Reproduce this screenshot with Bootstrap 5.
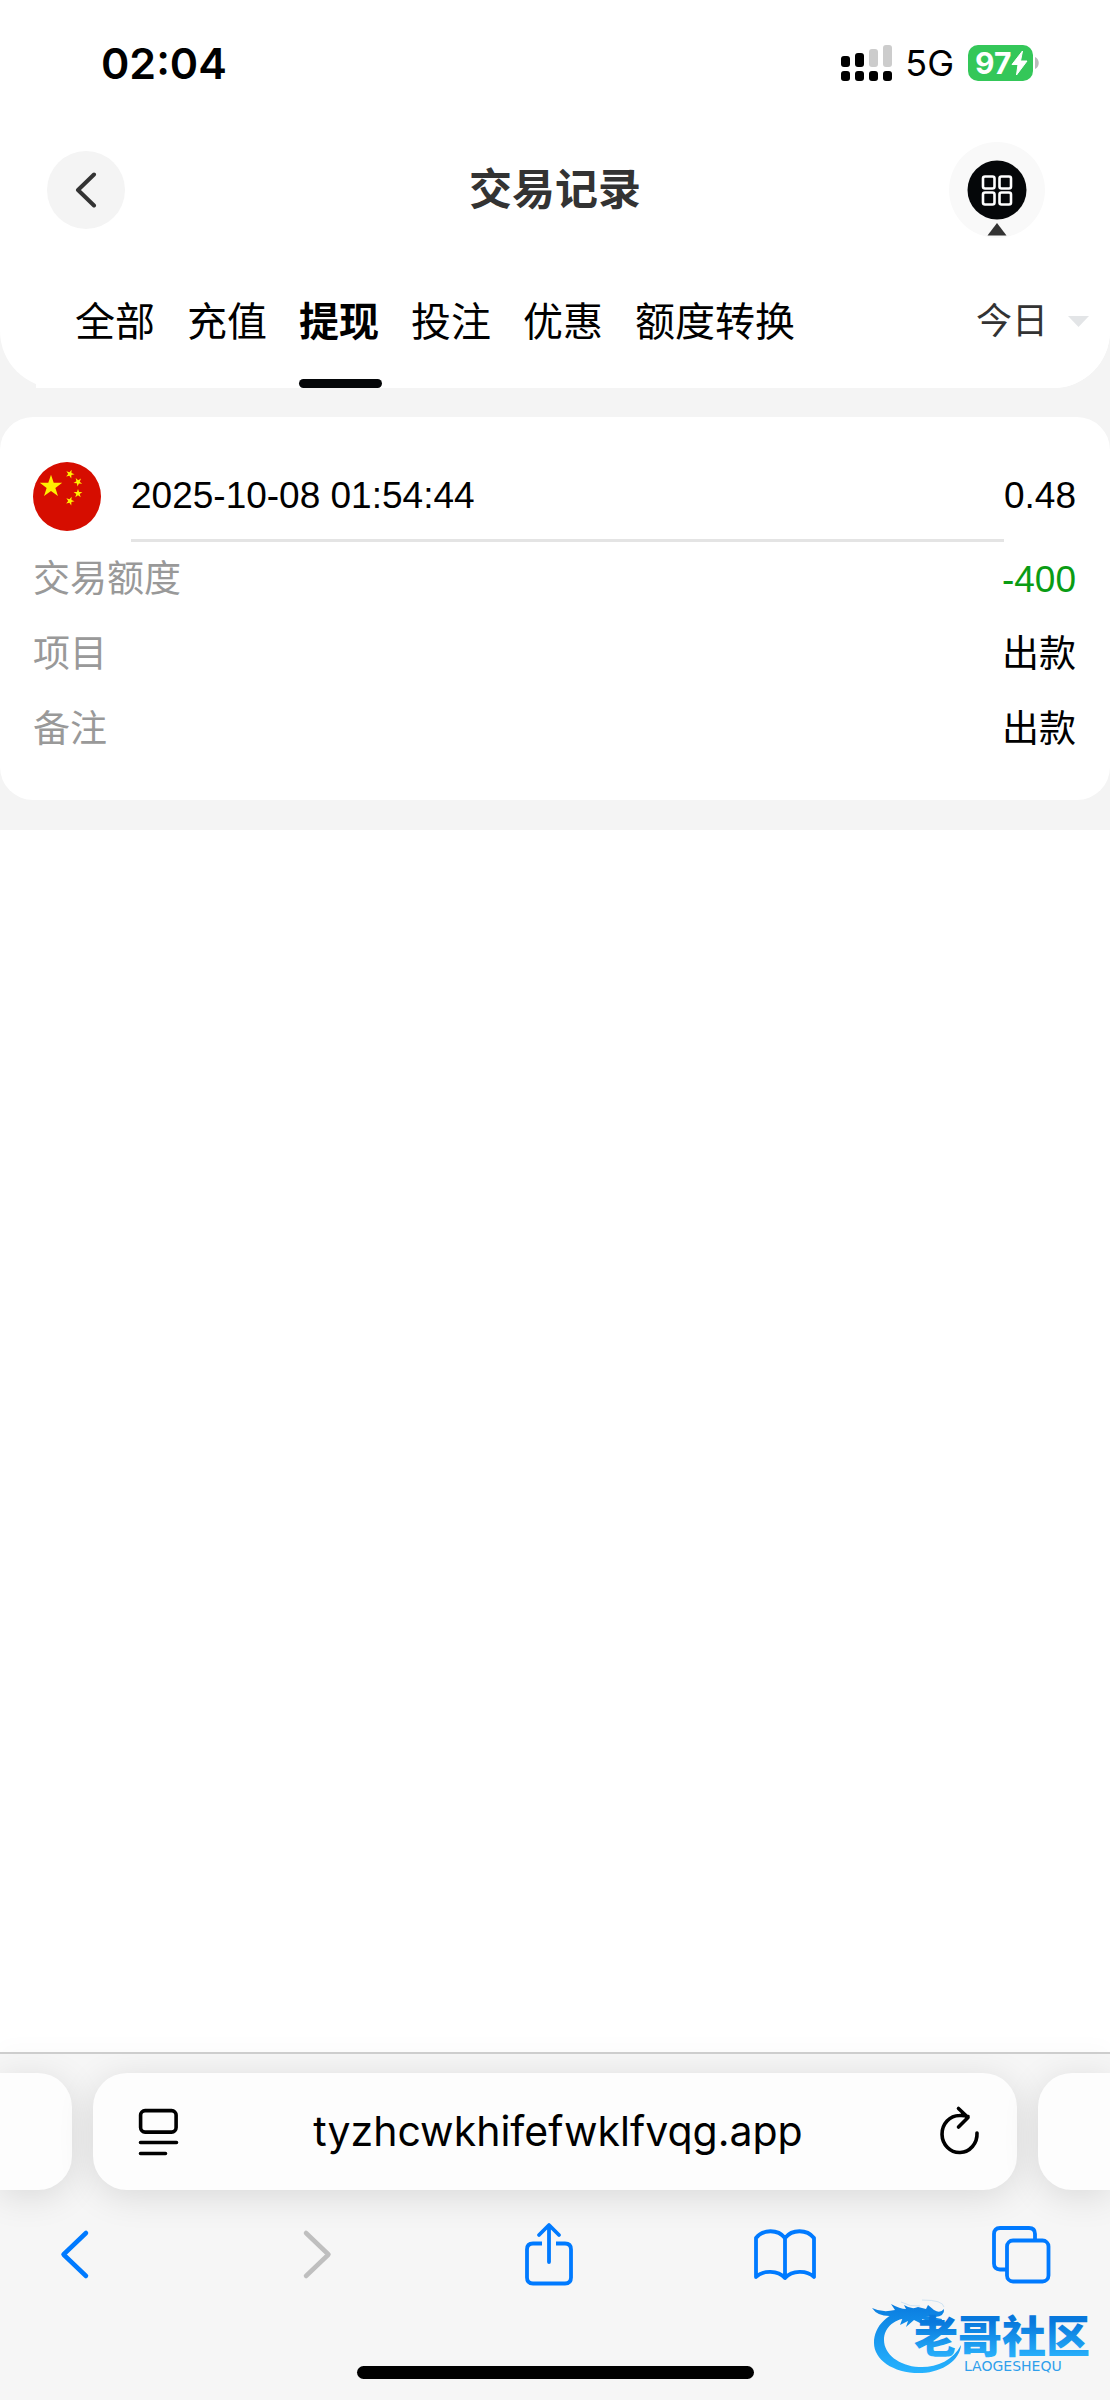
<!DOCTYPE html>
<html lang="zh-CN">
<head>
<meta charset="utf-8">
<meta name="viewport" content="width=device-width, initial-scale=1">
<title>交易记录</title>
<link href="https://cdn.jsdelivr.net/npm/bootstrap@5.3.0/dist/css/bootstrap.min.css" rel="stylesheet">
<style>
body{font-family:"Liberation Sans","Noto Sans CJK SC",sans-serif;color:#000;background:#fff}
svg{display:block;flex:none}
.ios-text{font-family:Inter,"Noto Sans CJK SC",sans-serif}
.page-top{background:#fff;border-radius:0 0 57px 57px}
.grey-zone{background:#f4f4f4}
.status-row{padding:31px 71px 47px 101px;line-height:64px}
.clock{font-size:43px;font-weight:600}
.net-type{font-size:36px;margin-left:13px;margin-right:14px}
.battery{background:#34c759;width:65px;height:36px;border-radius:10px;color:#fff;font-size:30px;font-weight:700;line-height:36px;padding-left:7px}
.title-row{padding:0 47px;height:96px}
.round-back{width:78px;height:78px;border-radius:50%;background:#f4f4f4;border:0}
.round-menu{width:96px;height:96px;border-radius:50%;background:#f9f9f9;border:0;margin-right:18px}
.page-title{font-size:43px;font-weight:700;color:#333;line-height:60px}
.filter-row{background:#fff;margin-left:36px;padding:58px 20px 0 39px;border-radius:0 0 57px 0}
.tabs-list{gap:32px}
.tabs-list .nav-link{padding:0;font-size:40px;line-height:52px;color:#000;height:92px}
.tabs-list .active{font-weight:700}
.tabs-list .active::after{content:"";display:block;width:83px;height:9px;margin-top:31px;margin-right:-3px;border-radius:5px;background:#050709}
.day-select{appearance:none;border:0;background:none;padding:0;font-size:36px;line-height:52px;height:52px;color:#333;width:74px}
.record{background:#fff;border-radius:33px;padding:45px 34px 33px 33px;margin:29px 0 30px;font-size:37px}
.record-head{line-height:68px}
.record-date{border-bottom:3px solid #e4e4e4;height:80px;margin-left:30px}
.record dl{line-height:75px}
.record dt{font-weight:400;color:#999}
.amount-out{color:#0a9c14}
.browser-bar{background:#f6f6f6;border-top:2px solid #cdcdcd;box-shadow:0 -6px 20px rgba(0,0,0,.02);padding:19px 0 21px}
.pill-row{gap:21px}
.pill{background:#fdfdfd;height:117px;border-radius:34px;box-shadow:0 6px 36px rgba(0,0,0,.12)}
.pill-side{width:72px}
.pill-left{border-radius:0 34px 34px 0}
.pill-right{border-radius:34px 0 0 34px}
.pill-main{padding:0 36px 0 44px}
.address{font-size:41px;border:0;background:none;text-align:center;min-width:0;padding:0;color:#000}
.plain-btn{border:0;background:none;padding:0}
.tool-row{padding:32px 58px 80px 45px}
.home-line{width:397px;height:13px;border-radius:7px;background:#000}
.site-mark{right:14px;bottom:22px}
</style>
<script src="https://cdn.jsdelivr.net/npm/bootstrap@5.3.0/dist/js/bootstrap.bundle.min.js"></script>
</head>
<body class="min-vh-100 d-flex flex-column position-relative">
<main class="grey-zone overflow-hidden">
  <header class="page-top">
    <div class="status-row ios-text d-flex justify-content-between align-items-center">
      <span class="clock">02:04</span>
      <div class="d-flex align-items-center">
        <svg width="51" height="36" viewBox="0 0 51 36" aria-hidden="true">
          <rect x="0" y="11" width="9" height="11" rx="3"/><rect x="14" y="8" width="9" height="14" rx="3"/>
          <rect x="28" y="4" width="9" height="18" rx="3" fill="#ccc"/><rect x="42" y="0" width="9" height="22" rx="3" fill="#ccc"/>
          <rect x="0" y="26" width="9" height="10" rx="3"/><rect x="14" y="26" width="9" height="10" rx="3"/><rect x="28" y="26" width="9" height="10" rx="3"/><rect x="42" y="26" width="9" height="10" rx="3"/>
        </svg>
        <span class="net-type">5G</span>
        <div class="battery d-flex align-items-center">97<svg width="17" height="26" viewBox="0 0 17 26" aria-hidden="true"><path d="M11.500 1 1 14.500h6L5.500 25 16 11h-6.500z" fill="#fff" stroke="#fff" stroke-linejoin="round"/></svg></div>
        <svg width="6" height="12" viewBox="0 0 6 12" aria-hidden="true"><path d="M2 0c5 2 5 10 0 12z" fill="#bbb"/></svg>
      </div>
    </div>
    <div class="title-row d-flex align-items-center">
      <div class="flex-fill w-50">
        <button class="round-back d-flex align-items-center justify-content-center" type="button" aria-label="返回">
          <svg width="22" height="36" viewBox="0 0 22 36"><path d="M19 2.500 3 18l16 15.500" fill="none" stroke="#333" stroke-width="4" stroke-linecap="round" stroke-linejoin="round"/></svg>
        </button>
      </div>
      <h1 class="page-title m-0 text-nowrap">交易记录</h1>
      <div class="flex-fill w-50 d-flex justify-content-end">
        <button class="round-menu p-0" type="button" aria-label="菜单">
          <svg width="96" height="96" viewBox="0 0 96 96"><circle cx="48" cy="48" r="29.500" fill="#050709"/><g fill="none" stroke="#fff" stroke-width="2.600"><rect x="34" y="34.500" width="11.500" height="12" rx="2"/><rect x="50.500" y="34.500" width="11.500" height="12" rx="2"/><rect x="34" y="50.500" width="11.500" height="12" rx="2"/><rect x="50.500" y="50.500" width="11.500" height="12" rx="2"/></g><path d="m48 81 9.500 12.500h-19z" fill="#333"/></svg>
        </button>
      </div>
    </div>
    <div class="filter-row d-flex justify-content-between align-items-start">
      <nav class="nav tabs-list flex-nowrap text-nowrap" aria-label="交易类型">
        <a class="nav-link" href="#">全部</a>
        <a class="nav-link" href="#">充值</a>
        <a class="nav-link active" aria-current="page" href="#">提现</a>
        <a class="nav-link" href="#">投注</a>
        <a class="nav-link" href="#">优惠</a>
        <a class="nav-link" href="#">额度转换</a>
      </nav>
      <div class="d-flex align-items-center">
        <select class="day-select" aria-label="日期"><option>今日</option></select>
        <svg class="ms-3" width="24" height="12" viewBox="0 0 24 12" aria-hidden="true"><path d="M2 0h21L12.500 11z" fill="#e3e5e7"/></svg>
      </div>
    </div>
  </header>

  <section class="record">
    <div class="record-head d-flex align-items-start">
      <svg width="68" height="70" viewBox="0 0 68 70" role="img" aria-label="中国">
        <defs><path id="star" d="M0-10 2.300-3.100 9.500-3.100 3.700 1.200 5.900 8.100 0 3.900-5.900 8.100-3.700 1.200-9.500-3.100-2.300-3.100z" fill="#fff000"/></defs>
        <ellipse cx="34" cy="34.500" rx="34" ry="34.500" fill="#d60d00"/>
        <use href="#star" transform="translate(18 24.500) scale(1.180)"/>
        <use href="#star" transform="translate(37 12) rotate(20) scale(.46)"/>
        <use href="#star" transform="translate(45 20) rotate(42) scale(.46)"/>
        <use href="#star" transform="translate(45 31.500) scale(.46)"/>
        <use href="#star" transform="translate(37 39) rotate(20) scale(.46)"/>
      </svg>
      <div class="record-date flex-fill">2025-10-08 01:54:44</div>
      <div>0.48</div>
    </div>
    <dl class="m-0">
      <div class="d-flex justify-content-between"><dt>交易额度</dt><dd class="m-0 amount-out">-400</dd></div>
      <div class="d-flex justify-content-between"><dt>项目</dt><dd class="m-0">出款</dd></div>
      <div class="d-flex justify-content-between"><dt>备注</dt><dd class="m-0">出款</dd></div>
    </dl>
  </section>
</main>

<footer class="browser-bar mt-auto overflow-hidden">
  <div class="pill-row d-flex">
    <div class="pill pill-side pill-left"></div>
    <div class="pill pill-main flex-fill d-flex align-items-center">
      <button class="plain-btn" type="button" aria-label="页面设置">
        <svg width="42" height="48" viewBox="0 0 42 48" fill="none" stroke="#000" stroke-width="3.600" stroke-linecap="round"><rect x="3.600" y="2.600" width="35.500" height="21.500" rx="4.500"/><path d="M3.500 34.500h36M3.500 45.500h25"/></svg>
      </button>
      <input class="address ios-text flex-fill" type="text" value="tyzhcwkhifefwklfvqg.app" aria-label="网址">
      <button class="plain-btn" type="button" aria-label="刷新">
        <svg width="44" height="54" viewBox="0 0 44 54" fill="none" stroke="#000" stroke-width="3.600" stroke-linecap="round" stroke-linejoin="round"><path d="M40 28A17.500 18.500 0 1 1 22.500 10.500Q27 10.200 31 11.500M21.500 3.500 31 12.500 21.500 22"/></svg>
      </button>
    </div>
    <div class="pill pill-side pill-right"></div>
  </div>
  <div class="tool-row d-flex justify-content-between">
    <button class="plain-btn" type="button" aria-label="后退"><svg width="60" height="64" viewBox="0 0 60 64" fill="none" stroke="#007aff" stroke-width="4.500" stroke-linecap="round" stroke-linejoin="round"><path d="M41 11 18.500 32.500 41 54"/></svg></button>
    <button class="plain-btn" type="button" aria-label="前进" disabled><svg width="60" height="64" viewBox="0 0 60 64" fill="none" stroke="#bfbfbf" stroke-width="4.500" stroke-linecap="round" stroke-linejoin="round"><path d="M25 11 47.500 32.500 25 54"/></svg></button>
    <button class="plain-btn" type="button" aria-label="分享"><svg width="60" height="64" viewBox="0 0 60 64" fill="none" stroke="#007aff" stroke-width="3.800" stroke-linecap="round" stroke-linejoin="round"><path d="M25 21.500h-9q-6 0-6 6v28q0 6 6 6h32q6 0 6-6v-28q0-6-6-6h-9" stroke-linecap="butt"/><path d="M32 40V4M22 13 32 3 42 13"/></svg></button>
    <button class="plain-btn" type="button" aria-label="书签"><svg width="64" height="64" viewBox="0 0 64 64" fill="none" stroke="#007aff" stroke-width="3.800" stroke-linecap="round" stroke-linejoin="round"><path d="M34 16C27 7 12 7 5 16V55C12 48 27 48 34 56 41 48 56 48 63 55V16C56 7 41 7 34 16V56" transform="translate(-1 0)"/></svg></button>
    <button class="plain-btn" type="button" aria-label="标签页"><svg width="60" height="64" viewBox="0 0 60 64" fill="none" stroke="#007aff" stroke-width="3.800"><rect x="15" y="18.500" width="41.500" height="41" rx="6"/><path d="M14 47.500H8q-6 0-6-6V12q0-6 6-6h29q6 0 6 6v6"/></svg></button>
  </div>
  <div class="home-line mx-auto"></div>
</footer>

<svg class="site-mark position-absolute" width="228" height="82" viewBox="868 2296 228 82" role="img" aria-label="老哥社区">
  <defs>
    <linearGradient id="ring" x1="0" y1="2305" x2="0" y2="2374" gradientUnits="userSpaceOnUse"><stop offset="0" stop-color="#0a7de0"/><stop offset="1" stop-color="#27b4ff"/></linearGradient>
    <linearGradient id="ink" x1="0" y1="2322" x2="0" y2="2358" gradientUnits="userSpaceOnUse"><stop offset="0" stop-color="#0878dc"/><stop offset="1" stop-color="#29b2fc"/></linearGradient>
  </defs>
  <g fill="url(#ring)">
    <path d="M908 2310C888 2312 874 2326 874 2343 874 2360 894 2374 922 2373 943 2372 960 2360 961 2345 953 2361 935 2368 919 2367 899 2366 884 2354 884 2340 884 2326 897 2317 912 2318z"/>
    <path d="M872 2308Q882 2313 895 2310L891 2304Q900 2309 906 2309L904 2305Q912 2310 918 2307L926 2309 928 2305 934 2310Q940 2314 944 2309 945 2316 935 2317L926 2316 942 2319Q941 2325 931 2322L922 2319 924 2325 914 2320 906 2327 908 2321 900 2325 903 2317 892 2316Q878 2317 872 2308z"/>
  </g>
  <path d="M901 2302Q910 2307 920 2306M922 2300Q943 2300 944 2307" fill="none" stroke="#cfe3f3" stroke-width="1"/>
  <text x="914" y="2353" font-family="Noto Sans CJK SC, sans-serif" font-weight="900" font-size="44" fill="url(#ink)">老哥社区</text>
  <text x="964" y="2371" font-family="DejaVu Sans, sans-serif" font-size="14" fill="#2f9fec">LAOGESHEQU</text>
</svg>
</body>
</html>
